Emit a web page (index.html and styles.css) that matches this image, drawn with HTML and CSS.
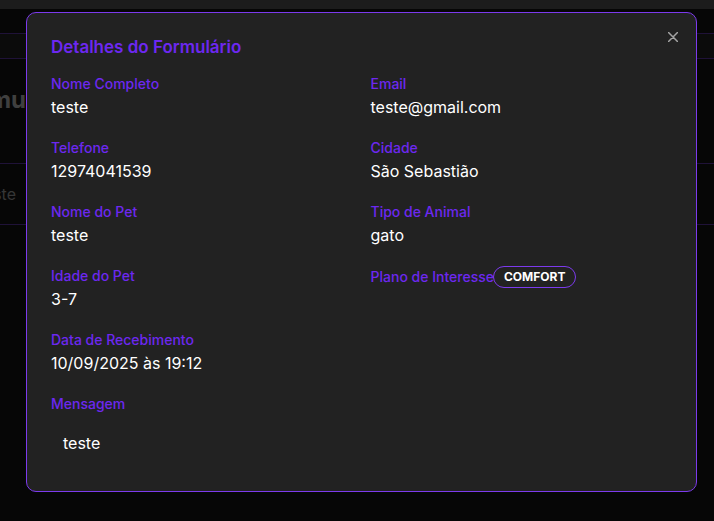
FILE: index.html
```html
<!DOCTYPE html>
<html lang="pt-BR">
<head>
<meta charset="utf-8">
<title>Detalhes do Formulário</title>
<link rel="stylesheet" href="styles.css">
</head>
<body>
<div class="page">
  <div class="topbar"></div>
  <div class="band"></div>
  <div class="heading-row"><div class="heading-clip"><span>Formu</span></div></div>
  <div class="table-row"><div class="cell-clip"><span>teste</span></div></div>
</div>

<div class="overlay">
  <div class="modal">
    <button class="close" aria-label="Fechar">
      <svg width="10" height="10" viewBox="0 0 10 10"><path d="M0.5 0.5L9.5 9.5M9.5 0.5L0.5 9.5" stroke="#a3a3a3" stroke-width="1.5" stroke-linecap="round"/></svg>
    </button>
    <h2 class="title">Detalhes do Formulário</h2>
    <div class="grid">
      <div class="field"><div class="label">Nome Completo</div><div class="value">teste</div></div>
      <div class="field"><div class="label">Email</div><div class="value">teste@gmail.com</div></div>
      <div class="field"><div class="label">Telefone</div><div class="value">12974041539</div></div>
      <div class="field"><div class="label">Cidade</div><div class="value">São Sebastião</div></div>
      <div class="field"><div class="label">Nome do Pet</div><div class="value">teste</div></div>
      <div class="field"><div class="label">Tipo de Animal</div><div class="value">gato</div></div>
      <div class="field"><div class="label">Idade do Pet</div><div class="value">3-7</div></div>
      <div class="field"><div class="label inline">Plano de Interesse<span class="badge">COMFORT</span></div></div>
      <div class="field"><div class="label">Data de Recebimento</div><div class="value">10/09/2025 às 19:12</div></div>
      <div class="field"></div>
      <div class="field full"><div class="label">Mensagem</div><div class="message">teste</div></div>
    </div>
  </div>
</div>
</body>
</html>
```

FILE: styles.css
```css
* { box-sizing: border-box; }
html, body { margin: 0; padding: 0; }
body {
  background: #060606;
  font-family: Inter, "Noto Sans", sans-serif;
  width: 714px;
  height: 521px;
  overflow: hidden;
}
.page { display: flex; flex-direction: column; }
.topbar { height: 9px; background: #1c1c1c; }
.band {
  margin-top: 24px;
  height: 26px;
  background: #0b0b0b;
  border-top: 1px solid #1f1238;
  border-bottom: 1px solid #1f1238;
}
.heading-row { height: 54px; display: flex; align-items: center; margin-top: 13px; }
.heading-clip {
  width: 26px; overflow: hidden; display: flex; justify-content: flex-end;
  font-size: 24px; font-weight: 700; color: #3f3f3f; white-space: nowrap;
}
.table-row {
  margin-top: 37px;
  height: 62px;
  display: flex; align-items: center;
  border-top: 1px solid #1f1238;
  border-bottom: 1px solid #1f1238;
}
.cell-clip {
  width: 16px; overflow: hidden; display: flex; justify-content: flex-end;
  font-size: 16px; color: #363636; white-space: nowrap;
}

.overlay { position: fixed; inset: 0; }
.modal {
  position: absolute;
  left: 26px; top: 12px; width: 671px;
  background: #222222;
  border: 1px solid #7c3aed;
  border-radius: 10px;
  padding: 22px 24px 24px;
}
.close {
  position: absolute; top: 19px; right: 18px;
  width: 10px; height: 10px; padding: 0; border: 0; background: none;
  display: flex;
}
.title {
  margin: 0 0 15px;
  font-size: 17px; line-height: 24px; font-weight: 600;
  color: #6d28f0;
}
.grid {
  display: grid;
  grid-template-columns: 1fr 1fr;
  column-gap: 18px;
  row-gap: 19px;
}
.full { grid-column: 1 / -1; }
.label {
  font-size: 14px; line-height: 20px; font-weight: 500;
  color: #6d28f0;
  margin-bottom: 1px;
}
.label.inline { display: flex; align-items: center; }
.value { font-size: 16px; line-height: 24px; color: #ffffff; }
.badge {
  display: inline-flex; align-items: center;
  height: 22px; padding: 0 10px 0 10px;
  border: 1px solid #7c3aed; border-radius: 999px;
  font-size: 12px; font-weight: 700; color: #ffffff;
  margin-left: -1px;
}
.message {
  margin-top: 5px;
  padding: 12px;
  font-size: 16px; line-height: 24px; color: #ffffff;
  border-radius: 8px;
}
```
